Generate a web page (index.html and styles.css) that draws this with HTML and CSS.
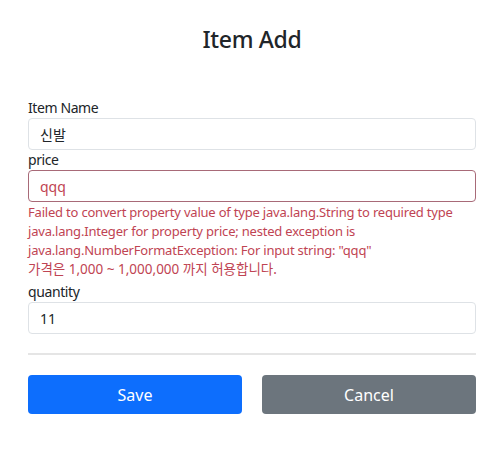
FILE: index.html
```html
<!DOCTYPE html>
<html lang="ko">
<head>
<meta charset="utf-8">
<link rel="stylesheet" href="styles.css">
</head>
<body>
<div class="container">
  <div class="header"><h2>Item Add</h2></div>
  <form class="form">
    <div class="field">
      <label>Item Name</label>
      <input class="control" type="text" value="신발">
    </div>
    <div class="field">
      <label>price</label>
      <input class="control error-control" type="text" value="qqq">
      <div class="error">Failed to convert property value of type java.lang.String to required type java.lang.Integer for property price; nested exception is java.lang.NumberFormatException: For input string: "qqq"<br><span class="error-ko">가격은 1,000 ~ 1,000,000 까지 허용합니다.</span></div>
    </div>
    <div class="field">
      <label>quantity</label>
      <input class="control" type="text" value="11">
    </div>
    <hr class="divider">
    <div class="buttons">
      <button type="button" class="btn btn-primary">Save</button>
      <button type="button" class="btn btn-secondary">Cancel</button>
    </div>
  </form>
</div>
</body>
</html>
```
FILE: styles.css
```css
* { box-sizing: border-box; }
body {
  margin: 0;
  font-family: "Noto Sans", "Noto Sans CJK KR", sans-serif;
  color: #212529;
  background: #fff;
  font-size: 14px;
}
.container {
  padding: 0 24px 0 28px;
}
.header {
  padding-top: 22px;
  padding-bottom: 42px;
  text-align: center;
}
.header h2 {
  margin: 0;
  font-size: 23px;
  font-weight: 500;
  line-height: 34px;
  letter-spacing: -0.3px;
}
.field {
  display: flex;
  flex-direction: column;
}
.field label {
  font-size: 14px;
  line-height: 20px;
  letter-spacing: -0.4px;
}
.control {
  height: 32px;
  border: 1px solid #dee2e6;
  border-radius: 4px;
  padding: 0 11px;
  font-family: inherit;
  font-size: 14px;
  color: #212529;
  outline: none;
}
.error-control {
  border-color: #a86a78;
  color: #bf4453;
}
.error {
  color: #bf4453;
  font-size: 13px;
  line-height: 19px;
  letter-spacing: -0.2px;
  margin-top: 1px;
  margin-bottom: 3px;
}
.error-ko {
  font-size: 13.5px;
  letter-spacing: 0;
}
.divider {
  border: 0;
  border-top: 2px solid #e5e5e5;
  margin: 19px 0 20px;
}
.buttons {
  display: grid;
  grid-template-columns: 1fr 1fr;
  gap: 20px;
}
.btn {
  height: 39px;
  border: 0;
  border-radius: 4px;
  color: #fff;
  font-family: inherit;
  font-size: 16px;
  cursor: pointer;
}
.btn-primary { background: #0d6efd; }
.btn-secondary { background: #6c757d; }
```
